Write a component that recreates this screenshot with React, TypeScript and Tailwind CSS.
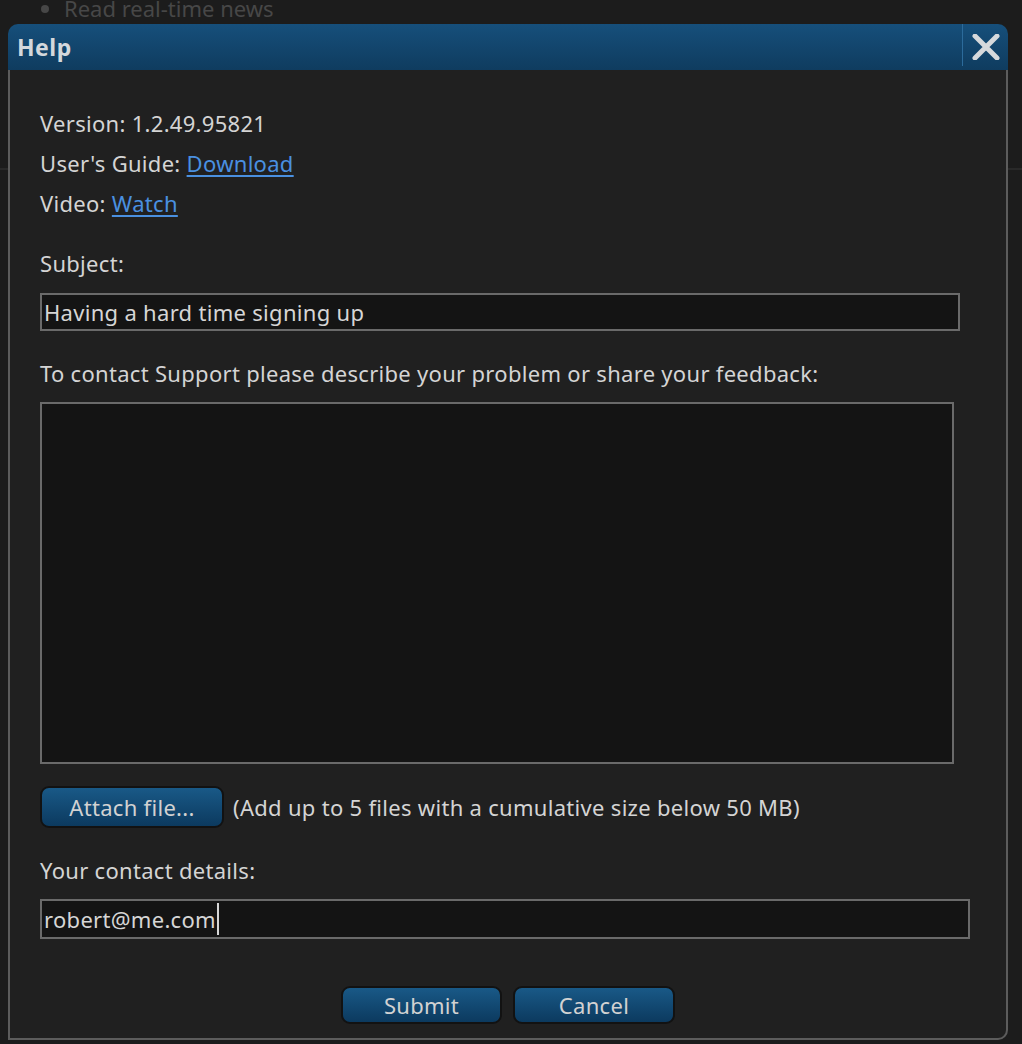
import React from 'react';

const font = { fontFamily: '"Noto Sans", "Open Sans", "Liberation Sans", sans-serif' };

function BlueButton({ label, className }: { label: string; className: string }) {
    return (
        <button
            className={
                'rounded-[9px] border-2 border-[#121212] bg-gradient-to-b from-[#195987] to-[#0c3a5f] text-[22px] tracking-[0.3px] text-[#d2d2d2] leading-none ' +
                className
            }>
            {label}
        </button>
    );
}

function TextInput({ value, width, caret }: { value: string; width: string; caret?: boolean }) {
    return (
        <div
            className={
                'flex items-center border-2 border-[#6a6a6a] bg-[#141414] pl-[2px] text-[22px] tracking-[0.3px] text-[#d6d6d6] ' +
                width
            }>
            <span>{value}</span>
            {caret && <span className="ml-[1px] h-[32px] w-[2px] bg-[#d6d6d6]" />}
        </div>
    );
}

export default function App() {
    return (
        <div className="relative h-[1044px] w-full overflow-hidden bg-[#1c1c1c]" style={font}>
            {/* page behind the dialog */}
            <div className="flex h-[170px] flex-col border-b-2 border-[#292929]">
                <ul className="mt-[-7px] list-disc pl-[64px] text-[22px] leading-[30px] text-[#474747] marker:text-[#474747]">
                    <li>Read real-time news</li>
                </ul>
            </div>

            {/* dialog */}
            <div className="absolute left-[8px] top-[24px] flex h-[1016px] w-[1000px] flex-col">
                <div className="flex h-[46px] items-stretch rounded-t-[10px] bg-gradient-to-b from-[#164f7b] to-[#0f3c5f]">
                    <div className="flex flex-1 items-center pl-[9px] text-[23px] font-bold tracking-[0.5px] text-[#d4d8dc]">
                        Help
                    </div>
                    <div className="mb-[4px] w-[1px] bg-[#2c6b9b]" />
                    <div className="flex w-[45px] items-center justify-center">
                        <svg width="28" height="26" viewBox="0 0 28 26">
                            <path
                                d="M3 2 L25 24 M25 2 L3 24"
                                stroke="#d6d9dc"
                                strokeWidth="5"
                                strokeLinecap="round"
                            />
                        </svg>
                    </div>
                </div>

                <div className="flex flex-1 flex-col rounded-br-[10px] border-2 border-t-0 border-[#5c5c5c] bg-[#202020] pl-[30px] pt-[33px] text-[22px] tracking-[0.3px] text-[#d4d4d4]">
                    <div className="leading-[40px]">Version: 1.2.49.95821</div>
                    <div className="leading-[40px]">
                        User's Guide:{' '}
                        <a className="text-[#4a90e0] underline underline-offset-[3px]">Download</a>
                    </div>
                    <div className="leading-[40px]">
                        Video: <a className="text-[#4a90e0] underline underline-offset-[3px]">Watch</a>
                    </div>

                    <div className="mt-[20px] leading-[40px]">Subject:</div>
                    <div className="mt-[10px]">
                        <TextInput value="Having a hard time signing up" width="h-[38px] w-[920px]" />
                    </div>

                    <div className="mt-[22px] leading-[40px]">
                        To contact Support please describe your problem or share your feedback:
                    </div>
                    <div className="mt-[9px] h-[362px] w-[914px] border-2 border-[#6a6a6a] bg-[#141414]" />

                    <div className="mt-[22px] flex items-center gap-[9px]">
                        <BlueButton label="Attach file..." className="h-[42px] w-[184px]" />
                        <span>(Add up to 5 files with a cumulative size below 50 MB)</span>
                    </div>

                    <div className="mt-[22px] leading-[40px]">Your contact details:</div>
                    <div className="mt-[9px]">
                        <TextInput value="robert@me.com" width="h-[40px] w-[930px]" caret />
                    </div>

                    <div className="mt-[47px] flex justify-center gap-[11px] pr-[30px]">
                        <BlueButton label="Submit" className="h-[38px] w-[161px]" />
                        <BlueButton label="Cancel" className="h-[38px] w-[162px]" />
                    </div>
                </div>
            </div>
        </div>
    );
}
